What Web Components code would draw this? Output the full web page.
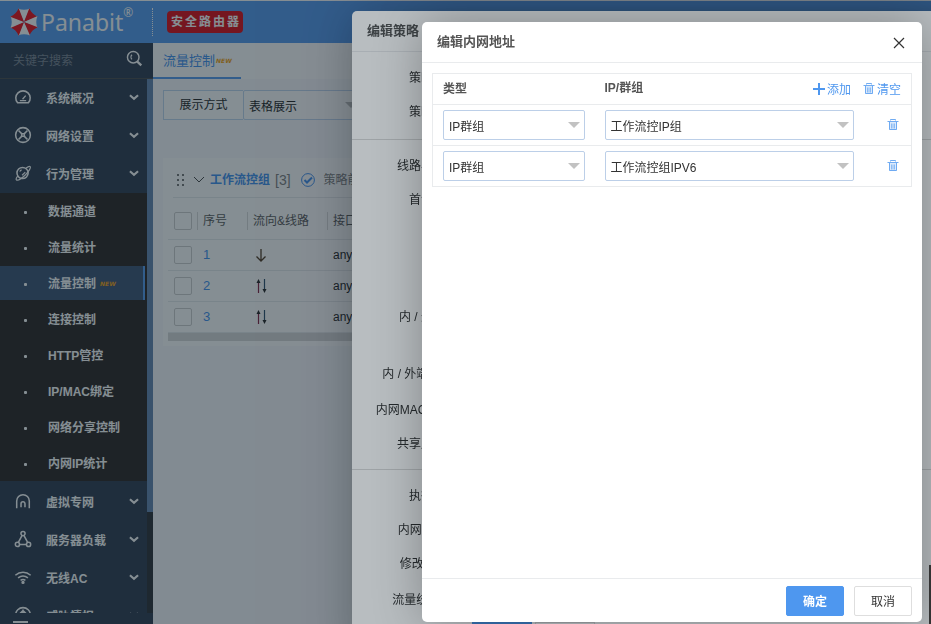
<!DOCTYPE html>
<html lang="zh-CN">
<head>
<meta charset="utf-8">
<title>Panabit</title>
<style>
  html, body {
    margin: 0;
    height: 100%;
    overflow: hidden;
  }

  body {
    font: 12px/18px "Liberation Sans", "Noto Sans CJK SC", sans-serif;
    color: #333;
    background: #f9fafd;
    --blue: #4e97ef;
    --line: #e9ebed;
    --shade: rgba(0, 19, 30, 0.28);
  }
</style>
</head>
<body>
<pb-app></pb-app>

<script>
const ICONS = {
  gauge: '<path d="M4 16.500a8 8 0 1 1 12 0z"/><path d="M9.500 12.500l3.500-4M6.500 14h7" stroke-width="1.500"/>',
  network: '<circle cx="10" cy="10" r="8.200"/><path d="M5 5l3.500 3.500h3L15 5M5 15l3.500-3.500h3L15 15M8.500 8.500v3M11.500 8.500v3"/>',
  planet: '<circle cx="9.500" cy="10" r="6.200"/><path stroke-width="1.300" d="M13.500 4.500c2-1.500 3.800-2.200 4.500-1.500 1 1-1.500 5.200-5.500 9.200s-8.500 6.500-9.800 5.500c-.800-.800 0-2.500 1.500-4.500M6.500 8.500c.300-1 1-1.700 2-2M9 12.500l3.500-3.500"/>',
  arch: '<path d="M3 18v-8a7 7 0 0 1 14 0v8M7.800 17v-4a2.200 2.200 0 0 1 4.400 0v4"/>',
  cluster: '<circle cx="10" cy="4" r="2.300"/><circle cx="3.800" cy="16" r="2.300"/><circle cx="16.200" cy="16" r="2.300"/><path d="M9 6l-4 7.500M11 6l4 7.500M6.500 16h7"/>',
  wifi: '<path d="M1.500 8c5-4.500 12-4.500 17 0M4.500 11c3.500-2.800 7.500-2.800 11 0M7.300 13.800c1.700-1.300 3.700-1.300 5.400 0"/><circle cx="10" cy="16" r="1"/>',
  threat: '<circle cx="10" cy="10" r="8.200"/><path d="M10 4v10M6 9l4-4 4 4"/>',
  down: '<path d="M5.500 8l4.500 4 4.500-4" stroke-width="2.400"/>',
  search: '<circle cx="8.500" cy="8.500" r="6.800"/><path d="M7 5.500C5.500 7 5.500 9.500 7 11" stroke-width="1.500"/><path d="M13 13.500l5 4.500" stroke-width="2.800"/>'
};

function icon(name, size) {
  return `<svg class="icon" width="${size}" height="${size}" viewBox="0 0 20 20" fill="none"
    stroke="currentColor" stroke-width="1.7" aria-hidden="true">${ICONS[name]}</svg>`;
}

const TRASH = `<svg width="12" height="12" viewBox="0 0 12 12" fill="none" stroke="currentColor" stroke-opacity="0.800" aria-hidden="true">
  <path d="M3.500 1.500V.5h5v1M.5 2.500h11"/>
  <path d="M2.500 3v7.500h7V3" fill="currentColor" fill-opacity="0.200"/>
  <path d="M4.500 4.500v5M6 4.500v5M7.500 4.500v5" stroke-width="0.700"/></svg>`;

class BaseElement extends HTMLElement {
  constructor() {
    super();
    this.attachShadow({ mode: "open" });
  }

  connectedCallback() {
    this.shadowRoot.innerHTML = this.template();
  }
}

/** Blue bar with logo and product badge */
class PbHeader extends BaseElement {
  template() {
    const wedges = [0, 45, 90, 135, 180, 225, 270, 315]
      .map((a, i) => `<path transform="rotate(${a} 15 15)" fill="${i % 2 ? "#ee1c25" : "#fff"}"
        d="M15 15L9 1.500Q15 4 21 1.500z"/>`)
      .join("");

    return `
      <style>
        :host {
          display: flex;
          align-items: center;
          height: 42px;
          border-top: 1px solid #fff;
          background: #60a2f0;
          color: #fff;
        }
        .logo {
          display: flex;
          align-items: center;
          width: 143px;
          padding-left: 9px;
          font: 23px/28px "Noto Sans", sans-serif;
        }
        .logo span { padding-left: 2px; }
        sup {
          align-self: flex-start;
          font-size: 12px;
          line-height: 12px;
        }
        .dots {
          height: 28px;
          border-left: 1px dotted #fff;
        }
        .badge {
          margin-left: 14px;
          padding: 2px 2px 2px 4px;
          border-radius: 4px;
          background: #e01a24;
          font-size: 12px;
          font-weight: 700;
          letter-spacing: 2px;
        }
      </style>
      <div class="logo">
        <svg width="30" height="30" viewBox="0 0 30 30" aria-hidden="true">${wedges}</svg>
        <span>Panabit</span><sup>®</sup>
      </div>
      <i class="dots"></i>
      <div class="badge">安全路由器</div>
    `;
  }
}

class NewTag extends BaseElement {
  template() {
    return `
      <style>
        :host {
          display: inline-block;
          font: italic 700 6px/8px "DejaVu Sans", sans-serif;
          color: #f5a623;
        }
      </style>NEW`;
  }
}

/** Top level menu entry, children go into the slot */
class NavGroup extends BaseElement {
  template() {
    return `
      <style>
        :host { display: block; }
        :host(:not(:empty)) { padding-bottom: 2px; }
        .row {
          box-sizing: border-box;
          display: flex;
          align-items: center;
          width: 100%;
          height: 38px;
          padding: 0 4px 0 14px;
          border: 0;
          background: none;
          color: inherit;
          font: inherit;
          font-weight: 700;
          text-align: left;
        }
        .icon { margin-bottom: 2px; }
        .label { flex: 1; padding: 1px 0 0 14px; }
        .sub { background: #3a3230; }
      </style>
      <button class="row" type="button">
        ${icon(this.getAttribute("icon"), 18)}
        <span class="label">${this.getAttribute("label")}</span>
        ${icon("down", 18)}
      </button>
      <div class="sub"><slot></slot></div>
    `;
  }
}

class NavLink extends BaseElement {
  template() {
    return `
      <style>
        :host {
          display: block;
          padding: 1px 2px 1px 0;
        }
        a {
          box-sizing: border-box;
          display: flex;
          align-items: center;
          height: 34px;
          padding: 2px 0 0 24px;
          border-right: 2px solid transparent;
          color: inherit;
          font-weight: 700;
          text-decoration: none;
        }
        :host([active]) a {
          background: #4a5f7e;
          border-color: #60a2f0;
        }
        .dot {
          width: 3px;
          height: 3px;
          margin-right: 21px;
          border-radius: 1px;
          background: currentColor;
        }
        new-tag { margin-left: 4px; }
      </style>
      <a href="#"><i class="dot"></i><slot></slot>${this.hasAttribute("active") ? "<new-tag></new-tag>" : ""}</a>
    `;
  }
}

class PbSidebar extends BaseElement {
  template() {
    return `
      <style>
        :host {
          display: flex;
          flex-direction: column;
          width: 153px;
          min-height: 0;
          background: #3c475a;
          color: #fff;
        }
        .search {
          display: flex;
          align-items: center;
          height: 35px;
          padding: 0 10px 0 13px;
          border-bottom: 1px solid #575657;
        }
        .search svg { margin-top: -4px; }
        input {
          flex: 1;
          min-width: 0;
          padding: 0;
          border: 0;
          outline: 0;
          background: none;
          color: inherit;
          font: inherit;
        }
        input::placeholder { color: #848c98; }
        .scroll {
          display: flex;
          flex: 1;
          min-height: 0;
          overflow: hidden;
        }
        nav { flex: 1; }
        .track {
          width: 6px;
          background: #3a3d42;
        }
        .thumb {
          height: 81%;
          background: #6e8cb4;
        }
        .fold {
          height: 11px;
          padding-left: 13px;
        }
        .fold i {
          display: block;
          width: 15px;
          height: 2px;
          margin-top: 8px;
          background: #fff;
        }
      </style>
      <div class="search">
        <input type="text" placeholder="关键字搜索" aria-label="关键字搜索">
        ${icon("search", 17)}
      </div>
      <div class="scroll">
        <nav>
          <nav-group icon="gauge" label="系统概况"></nav-group>
          <nav-group icon="network" label="网络设置"></nav-group>
          <nav-group icon="planet" label="行为管理">
            <nav-link>数据通道</nav-link>
            <nav-link>流量统计</nav-link>
            <nav-link active>流量控制</nav-link>
            <nav-link>连接控制</nav-link>
            <nav-link>HTTP管控</nav-link>
            <nav-link>IP/MAC绑定</nav-link>
            <nav-link>网络分享控制</nav-link>
            <nav-link>内网IP统计</nav-link>
          </nav-group>
          <nav-group icon="arch" label="虚拟专网"></nav-group>
          <nav-group icon="cluster" label="服务器负载"></nav-group>
          <nav-group icon="wifi" label="无线AC"></nav-group>
          <nav-group icon="threat" label="威胁情报"></nav-group>
        </nav>
        <div class="track"><div class="thumb"></div></div>
      </div>
      <div class="fold"><i></i></div>
    `;
  }
}

/** Drop-down with a flat grey arrow */
class SelectBox extends BaseElement {
  template() {
    return `
      <style>
        :host {
          display: grid;
          align-items: center;
        }
        select, i { grid-area: 1 / 1; }
        select {
          box-sizing: border-box;
          width: 100%;
          height: 30px;
          padding: 3px 20px 0 5px;
          border: 1px solid var(--select-line, #bccfe8);
          border-radius: 2px;
          appearance: none;
          background: #fff;
          color: #333;
          font: inherit;
        }
        i {
          justify-self: end;
          margin-right: 5px;
          border: 6px solid transparent;
          border-top-color: #c2c2c2;
          border-bottom: 0;
          pointer-events: none;
        }
      </style>
      <select aria-label="${this.getAttribute("label")}"><option>${this.getAttribute("value")}</option></select>
      <i></i>
    `;
  }
}

class PolicyTable extends BaseElement {
  template() {
    const down = '<path d="M8 2v12M3.500 9.500L8 14l4.500-4.500" stroke="#5a4630" stroke-width="1.300"/>';
    const both = `<path d="M5.500 15V4" stroke="#8a3050" stroke-width="1.200"/><path d="M3.500 5l2-4 2 4z" fill="#333"/>
      <path d="M11.500 1v11" stroke="#3a5a78" stroke-width="1.200"/><path d="M9.500 11l2 4 2-4z" fill="#333"/>`;
    const rows = [down, both, both]
      .map((arrow, i) => `
        <tr>
          <td><input type="checkbox" aria-label="选择 ${i + 1}"></td>
          <td><a href="#">${i + 1}</a></td>
          <td><svg width="16" height="16" viewBox="0 0 16 16" fill="none">${arrow}</svg></td>
          <td>any</td>
        </tr>`)
      .join("");

    return `
      <style>
        :host {
          display: block;
          padding: 0 5px 5px;
          background: #fff;
        }
        header {
          display: flex;
          align-items: center;
          height: 40px;
          margin-left: 5px;
          padding: 4px 0 0 4px;
          box-sizing: border-box;
          border-bottom: 1px solid var(--line);
          color: #888;
        }
        header b { padding: 0 5px; color: var(--blue); }
        header .chev { margin-left: 8px; }
        header .ok { margin: 0 9px 0 10px; color: var(--blue); }
        .count { font-size: 14px; }
        table {
          width: 100%;
          border-collapse: collapse;
          table-layout: fixed;
        }
        th, td {
          height: 30px;
          padding: 0 0 0 5px;
          border-bottom: 1px solid var(--line);
          font-weight: 400;
          text-align: left;
        }
        th {
          height: 36px;
          padding-top: 5px;
          color: #666;
        }
        th span {
          display: block;
          margin-left: -6px;
          padding-left: 5px;
          border-left: 1px solid #ddd;
        }
        td svg { display: block; }
        a {
          color: var(--blue);
          font-size: 13px;
          text-decoration: none;
        }
        input {
          display: block;
          box-sizing: border-box;
          width: 18px;
          height: 18px;
          margin: 0 0 0 1px;
          border: 1px solid #d2d2d2;
          border-radius: 2px;
          appearance: none;
        }
        .bar { height: 8px; background: #dadada; }
      </style>
      <header>
        <svg width="8" height="14" viewBox="0 0 8 14" fill="#555"><circle cx="1" cy="2" r="1"/><circle cx="6" cy="2" r="1"/><circle cx="1" cy="7" r="1"/><circle cx="6" cy="7" r="1"/><circle cx="1" cy="12" r="1"/><circle cx="6" cy="12" r="1"/></svg>
        <svg class="chev" width="12" height="8" viewBox="0 0 12 8" fill="none" stroke="#555"><path d="M1 1l5 5 5-5"/></svg>
        <b>工作流控组</b>
        <span class="count">[3]</span>
        <svg class="ok" width="14" height="14" viewBox="0 0 14 14" fill="none" stroke="currentColor"><circle cx="7" cy="7" r="6.400"/><path d="M3.500 7l2.500 2.500 5-5" stroke-width="2"/></svg>
        <span>策略前置</span>
      </header>
      <table>
        <colgroup><col width="30"><col width="50"><col width="80"><col></colgroup>
        <thead>
          <tr>
            <th><input type="checkbox" aria-label="全选"></th>
            <th><span>序号</span></th>
            <th><span>流向&amp;线路</span></th>
            <th><span>接口</span></th>
          </tr>
        </thead>
        <tbody>${rows}</tbody>
      </table>
      <div class="bar"></div>
    `;
  }
}

class PolicyPage extends BaseElement {
  template() {
    return `
      <style>
        :host { display: block; }
        .tabs {
          display: flex;
          height: 36px;
          background: #fff;
        }
        .tabs a {
          box-sizing: border-box;
          display: flex;
          align-items: center;
          width: 88px;
          padding: 2px 0 0 10px;
          border-bottom: 2px solid #60a2f0;
          color: var(--blue);
          font-size: 13px;
          text-decoration: none;
        }
        new-tag { margin-left: 1px; }
        main { padding: 11px 10px; }
        .mode {
          display: flex;
          --select-line: #c4d8f0;
        }
        .mode span {
          box-sizing: border-box;
          width: 80px;
          height: 30px;
          border: 1px solid var(--select-line);
          border-right: 0;
          background: #fff;
          line-height: 28px;
          text-align: center;
        }
        .mode select-box { width: 119px; }
        policy-table { margin-top: 38px; }
      </style>
      <div class="tabs"><a href="#">流量控制<new-tag></new-tag></a></div>
      <main>
        <div class="mode">
          <span>展示方式</span>
          <select-box label="展示方式" value="表格展示"></select-box>
        </div>
        <policy-table></policy-table>
      </main>
    `;
  }
}

/** Shaded layer with a titled box; default slot is the body */
class LayerDialog extends BaseElement {
  template() {
    const footer = `
      <footer>
        <button class="primary" type="button">确定</button>
        <button type="button">取消</button>
      </footer>`;

    return `
      <style>
        :host {
          position: fixed;
          inset: 0;
          overflow: hidden;
          background: var(--shade);
        }
        section {
          position: absolute;
          inset: var(--inset);
          display: flex;
          flex-direction: column;
          width: var(--width);
          border-radius: 5px;
          background: #fff;
          box-shadow: 1px 1px 50px rgba(0, 0, 0, 0.3);
        }
        header {
          display: flex;
          flex: none;
          align-items: center;
          justify-content: space-between;
          height: 40px;
          padding: 0 15px;
          border-bottom: 1px solid var(--line);
        }
        h2 {
          margin: 0;
          color: #555;
          font-size: 13px;
          font-weight: 700;
        }
        .close {
          width: 16px;
          height: 16px;
          padding: 0;
          border: 0;
          background: none;
        }
        .close svg { display: block; }
        .body { flex: 1; }
        footer {
          display: flex;
          justify-content: flex-end;
          gap: 10px;
          padding: 7px 10px 6px;
          border-top: 1px solid var(--line);
        }
        footer button {
          width: 58px;
          height: 30px;
          padding: 2px 0 0;
          border: 1px solid #dedede;
          border-radius: 2px;
          background: #fff;
          color: #333;
          font: inherit;
        }
        footer .primary {
          border-color: var(--blue);
          background: var(--blue);
          color: #fff;
          font-weight: 700;
        }
      </style>
      <section role="dialog">
        <header>
          <h2>${this.getAttribute("heading")}</h2>
          <button class="close" type="button" aria-label="关闭">
            <svg width="16" height="16" viewBox="0 0 16 16" stroke="#333" stroke-width="1.200"><path d="M3 4l10 10M13 4L3 14"/></svg>
          </button>
        </header>
        <div class="body"><slot></slot></div>
        ${this.hasAttribute("footer") ? footer : ""}
      </section>
    `;
  }
}

class PolicyForm extends BaseElement {
  template() {
    const groups = [
      [["策略序号", 34], ["策略名称", 34]],
      [["线路与流向", 34], ["首包条件", 34], ["", 83], ["内 / 外地址", 34], ["", 23], ["内 / 外端口组*", 34], ["内网MAC/ 地址", 38], ["共享用户数", 30]],
      [["执行动作", 34], ["内网IP限速", 34], ["修改DSCP", 34], ["流量统计组*", 38]]
    ];

    return `
      <style>
        :host { display: block; }
        .group {
          padding: 9px 0 10px;
          border-bottom: 1px solid #dcdcdc;
        }
        .group:last-of-type {
          padding-bottom: 3px;
          border: 0;
        }
        .label {
          display: flex;
          align-items: center;
          justify-content: flex-end;
          width: 105px;
        }
        nav {
          display: flex;
          gap: 3px;
          padding-left: 120px;
        }
        nav button {
          width: 60px;
          height: 30px;
          border: 1px solid #dedede;
          background: #fff;
        }
        nav .primary {
          border-color: var(--blue);
          background: var(--blue);
        }
      </style>
      ${groups.map(rows => `<div class="group">${rows
        .map(([text, height]) => `<div class="label" style="height:${height}px">${text}</div>`)
        .join("")}</div>`).join("")}
      <nav>
        <button class="primary" type="button" aria-label="确定"></button>
        <button type="button" aria-label="取消"></button>
      </nav>
    `;
  }
}

class AddressTable extends BaseElement {
  template() {
    const rows = ["工作流控IP组", "工作流控组IPV6"]
      .map(name => `
        <tr>
          <td><select-box label="类型" value="IP群组"></select-box></td>
          <td><select-box label="IP/群组" value="${name}"></select-box></td>
          <td class="ops"><button type="button" aria-label="删除">${TRASH}</button></td>
        </tr>`)
      .join("");

    return `
      <style>
        :host { display: block; padding: 10px; }
        table {
          width: 100%;
          border: 1px solid var(--line);
          border-collapse: collapse;
          table-layout: fixed;
        }
        th, td {
          box-sizing: border-box;
          height: 41px;
          padding: 0 10px;
          border-bottom: 1px solid var(--line);
          text-align: left;
        }
        th { height: 31px; color: #555; font-weight: 700; }
        td.ops { padding: 3px 12px 0 0; text-align: right; }
        .head {
          display: flex;
          justify-content: space-between;
        }
        .tools {
          display: flex;
          gap: 12px;
        }
        .tools button { padding-top: 2px; }
        .tools svg { margin-bottom: 3px; }
        button {
          display: inline-flex;
          align-items: center;
          gap: 2px;
          padding: 0;
          border: 0;
          background: none;
          color: var(--blue);
          font: inherit;
          font-weight: 400;
        }
      </style>
      <table>
        <colgroup><col width="162"><col width="269"><col></colgroup>
        <tr>
          <th>类型</th>
          <th colspan="2">
            <div class="head">
              <span>IP/群组</span>
              <span class="tools">
                <button type="button">
                  <svg width="12" height="12" viewBox="0 0 12 12" stroke="currentColor" stroke-width="2"><path d="M6 0v12M0 6h12"/></svg>添加
                </button>
                <button type="button">${TRASH}清空</button>
              </span>
            </div>
          </th>
        </tr>
        ${rows}
      </table>
    `;
  }
}

class PbApp extends BaseElement {
  template() {
    return `
      <style>
        :host {
          display: flex;
          flex-direction: column;
          height: 100vh;
        }
        .main {
          display: flex;
          flex: 1;
          min-height: 0;
        }
        policy-page { flex: 1; min-width: 0; }
        .edit-policy { --inset: 11px auto -36px 352px; --width: 640px; }
        .edit-address { --inset: 22px 9px 2px auto; --width: 500px; }
        .handle {
          position: fixed;
          right: 0;
          bottom: 0;
          width: 2px;
          height: 59px;
          background: #333;
        }
      </style>
      <pb-header></pb-header>
      <div class="main">
        <pb-sidebar></pb-sidebar>
        <policy-page></policy-page>
      </div>
      <layer-dialog class="edit-policy" heading="编辑策略"><policy-form></policy-form></layer-dialog>
      <layer-dialog class="edit-address" heading="编辑内网地址" footer><address-table></address-table></layer-dialog>
      <i class="handle"></i>
    `;
  }
}

customElements.define("new-tag", NewTag);
customElements.define("select-box", SelectBox);
customElements.define("nav-link", NavLink);
customElements.define("nav-group", NavGroup);
customElements.define("pb-header", PbHeader);
customElements.define("pb-sidebar", PbSidebar);
customElements.define("policy-table", PolicyTable);
customElements.define("policy-page", PolicyPage);
customElements.define("layer-dialog", LayerDialog);
customElements.define("policy-form", PolicyForm);
customElements.define("address-table", AddressTable);
customElements.define("pb-app", PbApp);
</script>
</body>
</html>
